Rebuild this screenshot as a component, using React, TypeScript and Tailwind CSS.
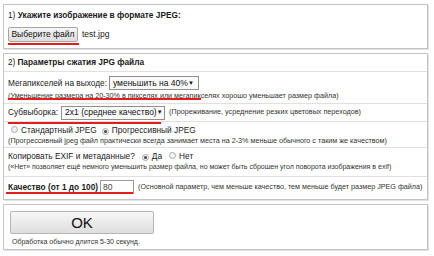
import { ReactNode } from "react";

function Box({ className, children }: { className?: string; children: ReactNode }) {
  return (
    <div
      className={
        "w-[425px] border border-[#c4c4c4] bg-white shadow-[1px_1px_0_#e2e2e2] " + (className ?? "")
      }
    >
      {children}
    </div>
  );
}

function Radio({ checked }: { checked?: boolean }) {
  return (
    <span className="inline-flex h-[7px] w-[7px] items-center justify-center rounded-full border border-[#aaa] bg-[#f2f2f2]">
      {checked && <span className="h-[3px] w-[3px] rounded-full bg-[#444]" />}
    </span>
  );
}

function Select({ value, className }: { value: string; className?: string }) {
  return (
    <div
      className={
        "flex h-[14px] shrink-0 items-center justify-between whitespace-nowrap border border-[#8f8f8f] bg-[#fafafa] pl-[3px] pr-[4px] text-[8.5px] text-[#111] " +
        (className ?? "")
      }
    >
      <span>{value}</span>
      <span className="text-[6px]">▼</span>
    </div>
  );
}

function RedLine({ className }: { className: string }) {
  return <span className={"absolute h-[2px] bg-[#e41c1c] " + className} />;
}

export default function App() {
  return (
    <div className="flex h-[256px] w-[434px] flex-col gap-[4px] bg-white pl-[3px] pt-[4px] font-['Liberation_Sans',Arial,sans-serif] text-[#1a1a1a]">
      {/* 1) file */}
      <Box className="relative h-[45px] px-[4px] pt-[5px]">
        <div className="whitespace-nowrap text-[8.3px] leading-[11px]">
          1) <b>Укажите изображение в формате JPEG:</b>
        </div>
        <div className="mt-[6px] flex items-center gap-[4px]">
          <button className="h-[15px] w-[70px] whitespace-nowrap rounded-[2px] border border-[#a6a6a6] bg-gradient-to-b from-[#f6f6f6] to-[#dcdcdc] text-[8.5px] leading-none text-[#111]">
            Выберите файл
          </button>
          <span className="text-[8.5px]">test.jpg</span>
        </div>
        <RedLine className="left-[4px] top-[38px] w-[71px]" />
      </Box>

      {/* 2) params */}
      <Box className="h-[147px]">
        <div className="flex h-[18px] items-center whitespace-nowrap border-b border-[#e0e0e0] px-[4px] text-[8.3px]">
          2) <b className="ml-[2px]">Параметры сжатия JPG файла</b>
        </div>

        <div className="relative h-[32px] border-b border-[#e0e0e0] px-[4px] pt-[4px]">
          <div className="flex items-center gap-[2px] whitespace-nowrap text-[8.3px]">
            <span>Мегапикселей на выходе:</span>
            <Select value="уменьшить на 40%" className="w-[90px]" />
          </div>
          <div className="mt-[1px] whitespace-nowrap text-[7.2px] leading-[10px] text-[#333]">
            (Уменьшение размера на 20-30% в пикселях или мегапикселях хорошо уменьшает размер файла)
          </div>
          <RedLine className="left-[4px] top-[26px] w-[193px]" />
        </div>

        <div className="relative flex h-[18px] items-center gap-[3px] whitespace-nowrap border-b border-[#e0e0e0] px-[4px] text-[8.3px]">
          <span>Субвыборка:</span>
          <Select value="2x1 (среднее качество)" className="w-[104px]" />
          <span className="ml-[1px] text-[7.2px] text-[#333]">
            (Прореживание, усреднение резких цветовых переходов)
          </span>
          <RedLine className="left-[4px] top-[18px] w-[153px]" />
        </div>

        <div className="h-[26px] border-b border-[#e0e0e0] px-[4px] pt-[3px]">
          <div className="flex items-center whitespace-nowrap text-[8.3px] leading-[11px]">
            <span className="ml-[3px] mr-[3px]">
              <Radio />
            </span>
            <span>Стандартный JPEG</span>
            <span className="ml-[5px] mr-[3px]">
              <Radio checked />
            </span>
            <span>Прогрессивный JPEG</span>
          </div>
          <div className="whitespace-nowrap text-[7.2px] leading-[10px] text-[#333]">
            (Прогрессивный jpeg файл практически всегда занимает места на 2-3% меньше обычного с таким же качеством)
          </div>
        </div>

        <div className="h-[29px] border-b border-[#e0e0e0] px-[4px] pt-[3px]">
          <div className="flex items-center whitespace-nowrap text-[8.3px] leading-[11px]">
            <span>Копировать EXIF и метаданные?</span>
            <span className="ml-[7px] mr-[3px]">
              <Radio checked />
            </span>
            <span>Да</span>
            <span className="ml-[7px] mr-[3px]">
              <Radio />
            </span>
            <span>Нет</span>
          </div>
          <div className="whitespace-nowrap text-[7px] leading-[10px] text-[#333]">
            («Нет» позволяет ещё немного уменьшить размер файла, но может быть сброшен угол поворота изображения в exif)
          </div>
        </div>

        <div className="relative flex h-[20px] items-center gap-[2px] whitespace-nowrap px-[4px] text-[8.3px]">
          <b className="shrink-0">Качество (от 1 до 100)</b>
          <div className="flex h-[14px] w-[34px] shrink-0 items-center border border-[#9a9a9a] bg-white pl-[2px] text-[8.5px] text-[#444]">
            80
          </div>
          <span className="ml-[2px] text-[7.2px] text-[#333]">
            (Основной параметр, чем меньше качество, тем меньше будет размер JPEG файла)
          </span>
          <RedLine className="left-[2px] top-[15px] w-[127px]" />
        </div>
      </Box>

      {/* 3) submit */}
      <Box className="h-[46px] pl-[6px] pt-[6px]">
        <button className="h-[23px] w-[144px] rounded-[2px] border border-[#b4b4b4] bg-gradient-to-b from-[#f7f7f7] to-[#dedede] text-[15px] leading-none text-[#111]">
          OK
        </button>
        <div className="ml-[2px] mt-[2px] whitespace-nowrap text-[7px] leading-[9px] text-[#333]">
          Обработка обычно длится 5-30 секунд.
        </div>
      </Box>
    </div>
  );
}
